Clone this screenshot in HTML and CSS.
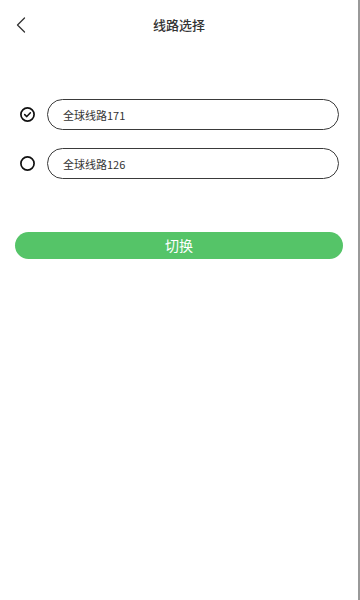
FILE: index.html
```html
<!DOCTYPE html>
<html lang="zh-CN">
<head>
<meta charset="utf-8">
<meta name="viewport" content="width=360">
<title>线路选择</title>
<link rel="stylesheet" href="styles.css">
</head>
<body>
<div class="page">
  <header class="nav">
    <span class="back" aria-label="返回">
      <svg width="10" height="16" viewBox="0 0 10 16"><path d="M8.5 1 L1.5 8 L8.5 15" fill="none" stroke="#333" stroke-width="1.3" stroke-linecap="round" stroke-linejoin="round"/></svg>
    </span>
    <h1 class="title">线路选择</h1>
    <span class="spacer"></span>
  </header>

  <ul class="lines">
    <li class="line">
      <span class="radio">
        <svg width="15" height="15" viewBox="0 0 15 15"><circle cx="7.5" cy="7.5" r="6.6" fill="none" stroke="#111" stroke-width="1.7"/><path d="M4.7 7.6 L6.8 9.6 L10.4 5.8" fill="none" stroke="#111" stroke-width="1.5" stroke-linecap="round" stroke-linejoin="round"/></svg>
      </span>
      <div class="pill">全球线路171</div>
    </li>
    <li class="line">
      <span class="radio">
        <svg width="15" height="15" viewBox="0 0 15 15"><circle cx="7.5" cy="7.5" r="6.6" fill="none" stroke="#111" stroke-width="1.7"/></svg>
      </span>
      <div class="pill">全球线路126</div>
    </li>
  </ul>

  <button class="switch">切换</button>
</div>
</body>
</html>
```

FILE: styles.css
```css
html, body {
  margin: 0;
  padding: 0;
  background: #fff;
}

body {
  font-family: "Noto Sans CJK SC", "Noto Sans", sans-serif;
  color: #333;
}

.page {
  box-sizing: border-box;
  width: 360px;
  height: 600px;
  border-right: 2px solid #999;
  background: #fff;
}

.nav {
  height: 48px;
  display: grid;
  grid-template-columns: 1fr auto 1fr;
  align-items: center;
}

.back {
  display: flex;
  align-items: center;
  padding-left: 16px;
  padding-top: 1px;
}

.back svg {
  display: block;
}

.title {
  margin: 0;
  font-size: 13px;
  font-weight: 500;
  color: #333;
  line-height: 20px;
  padding-top: 1px;
}

.lines {
  list-style: none;
  margin: 0;
  padding: 51px 19px 0 20px;
  display: flex;
  flex-direction: column;
  gap: 18px;
}

.line {
  display: flex;
  align-items: center;
  gap: 12px;
}

.radio {
  display: flex;
  width: 15px;
  height: 15px;
}

.radio svg {
  display: block;
}

.pill {
  flex: 1;
  box-sizing: border-box;
  height: 31px;
  border: 1px solid #3a3a3a;
  border-radius: 16px;
  padding-left: 15px;
  display: flex;
  align-items: center;
  font-size: 11px;
  color: #333;
}

.switch {
  display: block;
  box-sizing: border-box;
  width: 328px;
  height: 27px;
  margin: 53px 0 0 15px;
  border: none;
  border-radius: 14px;
  background: #55c468;
  color: #fff;
  font-family: "Noto Sans CJK SC", sans-serif;
  font-size: 14px;
  line-height: 27px;
  padding: 0;
}
```
